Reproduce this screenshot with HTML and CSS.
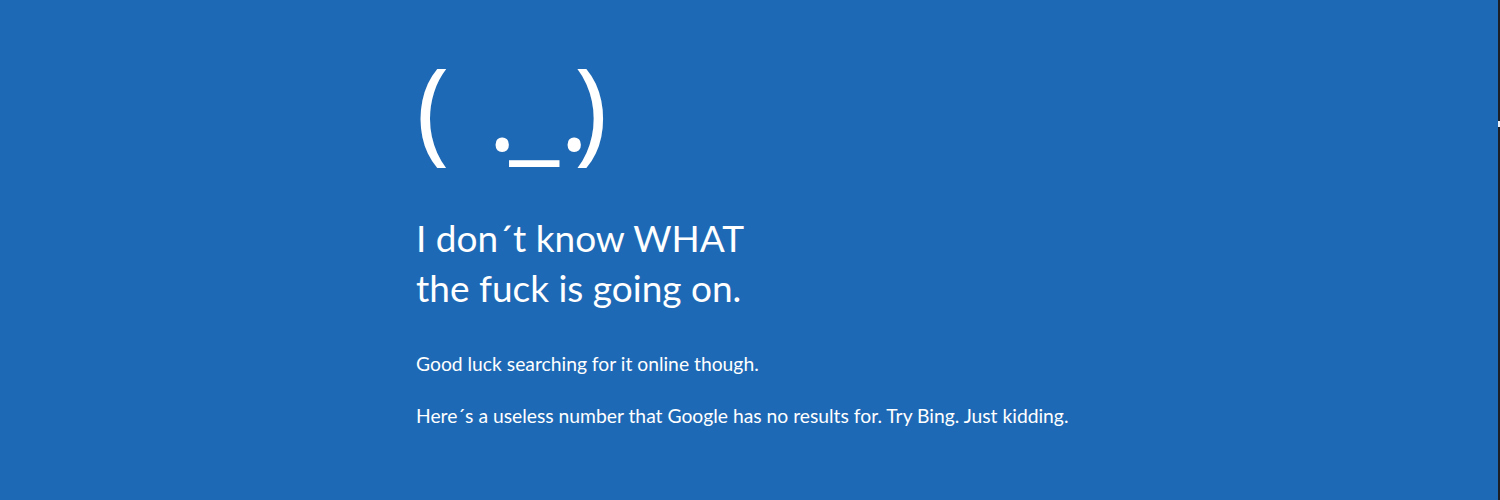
FILE: index.html
```html
<!DOCTYPE html>
<html lang="en">
<head>
    <meta charset="UTF-8">
    <meta name="viewport" content="width=device-width, initial-scale=1.0">
    <title>Stop code</title>
    <link rel="stylesheet" href="styles.css">
</head>
<body>
    <div class="bsod">
        <main class="bsod-content">
            <div class="bsod-face">(<span class="face-space"> </span><span class="face-eye-left">.</span>_<span class="face-eye-right">.</span>)</div>
            <h1 class="bsod-title">I don´t know WHAT<br>the fuck is going on.</h1>
            <p class="bsod-text">Good luck searching for it online though.</p>
            <p class="bsod-text">Here´s a useless number that Google has no results for. Try Bing. Just kidding.</p>
        </main>
        <div class="bsod-edge">
            <span class="edge-mark"></span>
        </div>
    </div>
</body>
</html>
```
FILE: styles.css
```css
:root {
    --blue: #1e69b5;
    --white: #ffffff;
    --edge: #1c1f26;
}

* {
    margin: 0;
    padding: 0;
    box-sizing: border-box;
}

body {
    background: var(--blue);
    color: var(--white);
    font-family: 'Lato', 'Open Sans', sans-serif;
    height: 100vh;
    overflow: hidden;
}

.bsod {
    display: flex;
    height: 100%;
}

.bsod-content {
    flex: 1;
    padding: 38px 0 0 416px;
}

.bsod-face {
    font-family: 'Open Sans', sans-serif;
    font-size: 114px;
    font-weight: 400;
    line-height: 136px;
    white-space: pre;
}

.face-space {
    letter-spacing: 8px;
}

.face-eye-left {
    letter-spacing: -8px;
}

.face-eye-right {
    letter-spacing: -15px;
}

.bsod-title {
    font-size: 37px;
    font-weight: 400;
    line-height: 50px;
    margin-top: 39px;
    margin-bottom: 38px;
}

.bsod-text {
    font-size: 19.3px;
    line-height: 26px;
    margin-bottom: 26px;
}

.bsod-edge {
    width: 2px;
    background: var(--edge);
    padding-top: 121px;
}

.edge-mark {
    display: block;
    width: 2px;
    height: 6px;
    background: #e8eef6;
}
```
